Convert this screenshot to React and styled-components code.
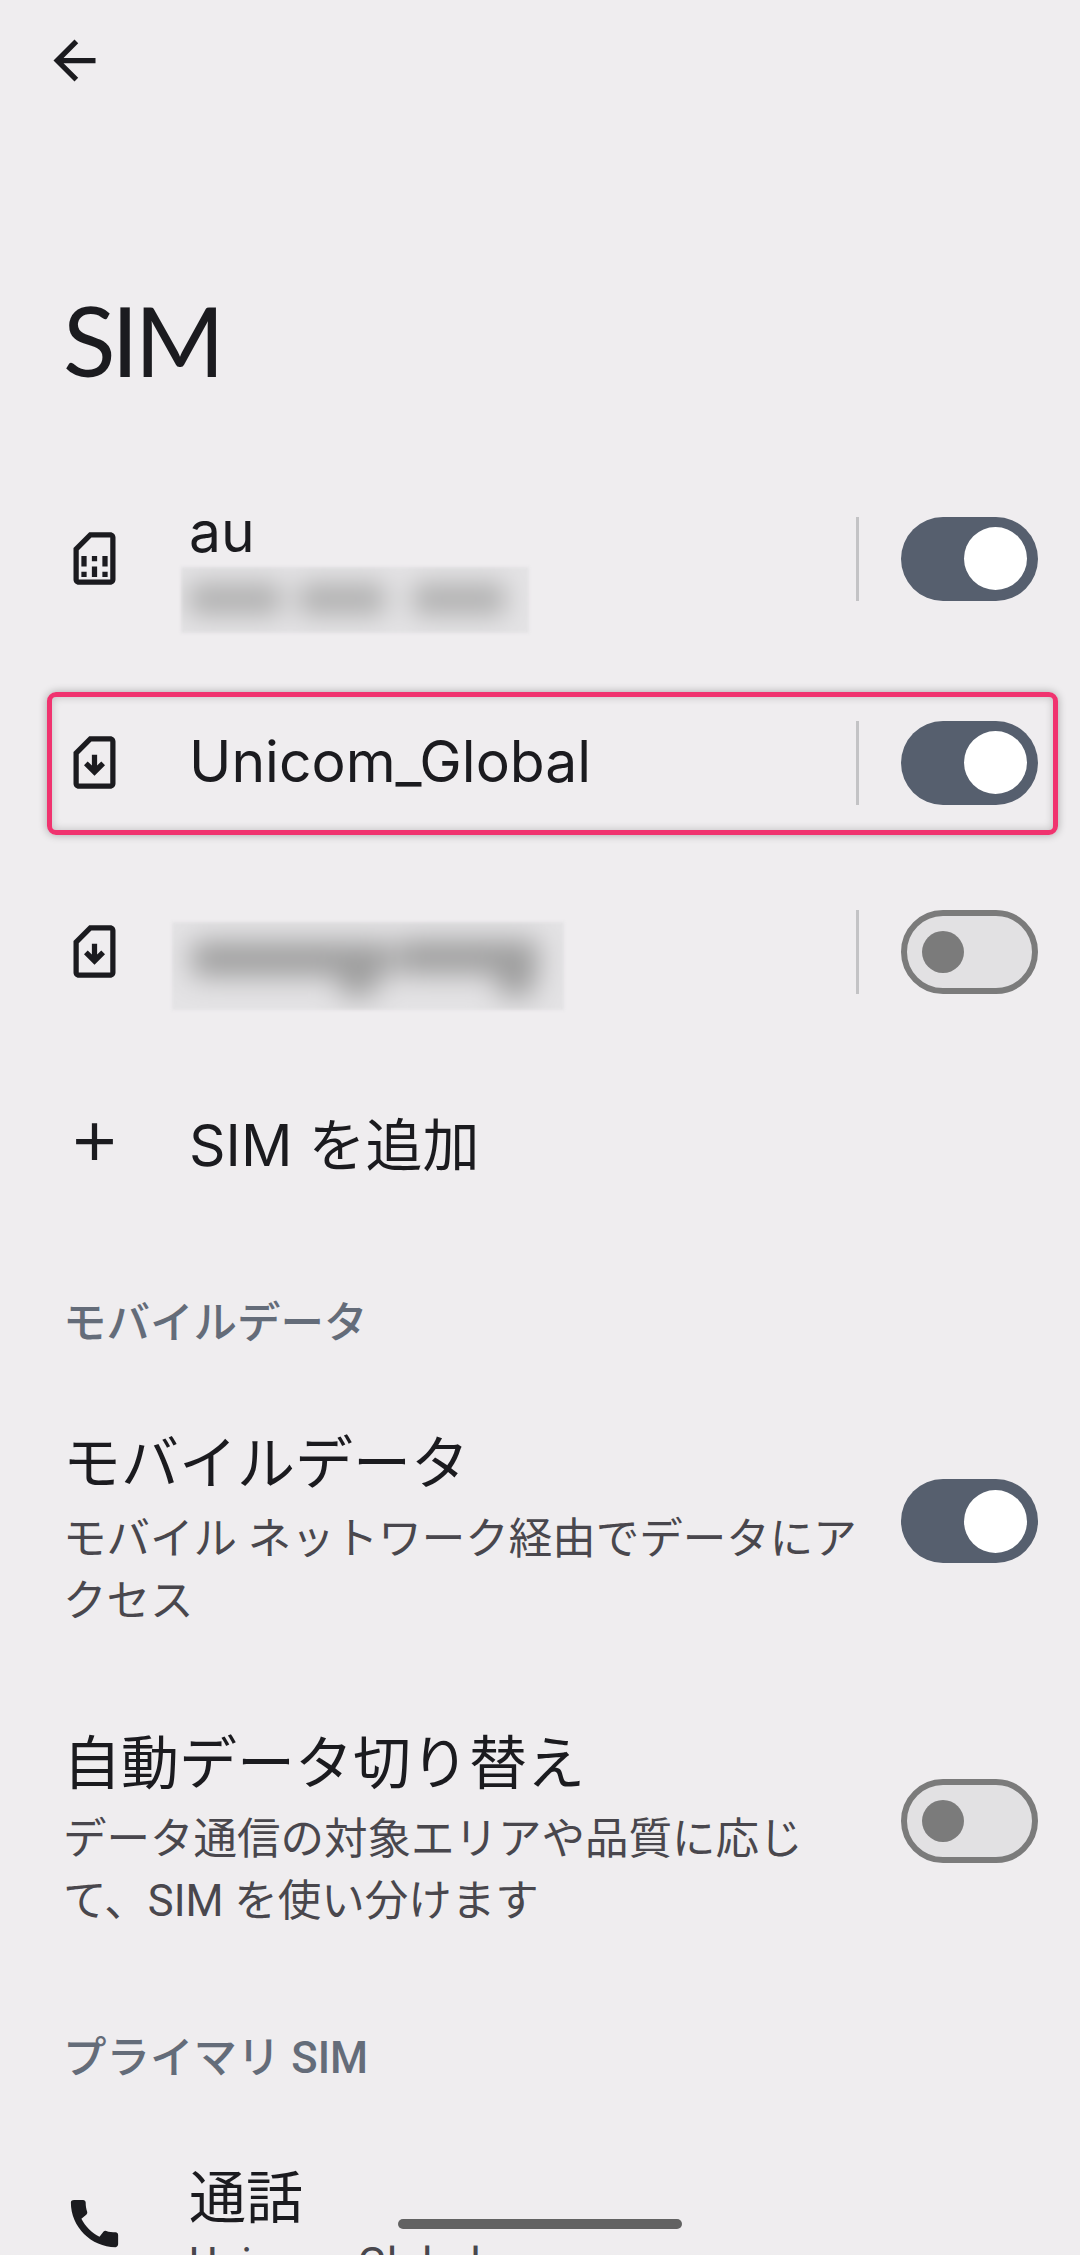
import styled, { createGlobalStyle } from "styled-components";
import { MdArrowBack, MdAdd, MdCall, MdOutlineSimCard, MdOutlineSimCardDownload } from "react-icons/md";

const GlobalStyle = createGlobalStyle`
  html, body {
    margin: 0;
    padding: 0;
    background: #efedef;
  }
`;

const Screen = styled.div`
  position: relative;
  width: 1080px;
  height: 2255px;
  overflow: hidden;
  background: #efedef;
  color: #1b1b1f;
  font-family: Inter, "Noto Sans CJK JP", sans-serif;
`;

const Toolbar = styled.div`
  height: 120px;
  padding-left: 43px;
  display: flex;
  align-items: center;
  svg {
    font-size: 63px;
  }
`;

const Heading = styled.h1`
  margin: 0;
  padding: 160px 0 49px 63px;
  font-family: Lato, sans-serif;
  font-size: 97px;
  line-height: 120px;
  font-weight: 400;
  letter-spacing: -4px;
`;

const Row = styled.div`
  position: relative;
  display: flex;
  align-items: center;
  box-sizing: border-box;
  height: ${(p) => p.$height}px;
  padding: 0 42px 0 63px;
`;

const IconSlot = styled.div`
  flex: none;
  width: 63px;
  height: 63px;
  margin-right: 63px;
  display: flex;
  align-items: center;
  justify-content: center;
  svg {
    font-size: 63px;
  }
`;

const RowBody = styled.div`
  flex: 1;
  min-width: 0;
  margin-top: ${(p) => p.$shift || 0}px;
`;

const RowTitle = styled.div`
  font-size: ${(p) => p.$size || 57}px;
  line-height: 66px;
`;

const Summary = styled.div`
  font-family: Roboto, "Noto Sans CJK JP", sans-serif;
  font-size: 43.5px;
  line-height: 62px;
  color: #49474d;
  margin-top: ${(p) => p.$gap || 0}px;
`;

// blurred-out number plates on the SIM rows
const Redacted = styled.div`
  width: ${(p) => p.$w}px;
  height: ${(p) => p.$h}px;
  margin-left: ${(p) => p.$left}px;
  margin-top: ${(p) => p.$top}px;
  background: #e4e3e5;
  overflow: hidden;
  filter: blur(1.5px);
`;

const Smudge = styled.svg`
  display: block;
  width: 100%;
  height: 100%;
  filter: blur(${(p) => p.$blur}px);
  fill: ${(p) => p.$fill};
`;

const Divider = styled.div`
  flex: none;
  width: 3px;
  height: 84px;
  margin-right: 42px;
  background: #c3c3c5;
`;

const Track = styled.div`
  flex: none;
  box-sizing: border-box;
  width: 137px;
  height: 84px;
  border-radius: 42px;
  display: flex;
  align-items: center;
  justify-content: ${(p) => (p.$on ? "flex-end" : "flex-start")};
  padding: ${(p) => (p.$on ? "0 11px" : "0 15px")};
  background: ${(p) => (p.$on ? "#565f6e" : "#e2e1e3")};
  border: ${(p) => (p.$on ? "none" : "6px solid #7b7b7b")};
`;

const Thumb = styled.div`
  width: ${(p) => (p.$on ? 63 : 42)}px;
  height: ${(p) => (p.$on ? 63 : 42)}px;
  border-radius: 50%;
  background: ${(p) => (p.$on ? "#ffffff" : "#7b7b7b")};
`;

const Toggle = ({ on }) => (
  <Track $on={on}>
    <Thumb $on={on} />
  </Track>
);

const HighlightFrame = styled.div`
  position: absolute;
  top: 24px;
  bottom: 22px;
  left: 47px;
  right: 22px;
  border: 5px solid #f0336f;
  border-radius: 9px;
  box-shadow: 0 0 8px rgba(0, 0, 0, 0.3), inset 0 0 8px rgba(0, 0, 0, 0.2);
  pointer-events: none;
`;

const SectionLabel = styled.div`
  box-sizing: border-box;
  height: 135px;
  padding: 63px 0 0 63px;
  font-family: Roboto, "Noto Sans CJK JP", sans-serif;
  font-size: 43.5px;
  line-height: 50px;
  font-weight: 500;
  color: #646c79;
`;

const SettingRow = styled.div`
  box-sizing: border-box;
  height: 300px;
  padding: 59px 42px 0 63px;
  display: flex;
  align-items: flex-start;
`;

const SettingText = styled.div`
  flex: 1;
  min-width: 0;
  margin-right: 42px;
`;

const ToggleSlot = styled.div`
  flex: none;
  margin-top: 49px;
`;

const HomeBar = styled.div`
  position: absolute;
  left: 398px;
  bottom: 26px;
  width: 284px;
  height: 10px;
  border-radius: 5px;
  background: #626262;
`;

export default function App() {
  return (
    <Screen>
      <GlobalStyle />
      <Toolbar>
        <MdArrowBack />
      </Toolbar>
      <Heading>SIM</Heading>

      <Row $height={219}>
        <IconSlot><MdOutlineSimCard /></IconSlot>
        <RowBody $shift={14}>
          <RowTitle>au</RowTitle>
          <Redacted $w={348} $h={66} $left={-8} $top={2}>
            <Smudge viewBox="0 0 348 66" $blur={13} $fill="#b0b0b0">
              <rect x="8" y="16" width="92" height="32" />
              <rect x="118" y="16" width="86" height="32" />
              <rect x="232" y="16" width="92" height="32" />
            </Smudge>
          </Redacted>
        </RowBody>
        <Divider />
        <Toggle on />
      </Row>

      <Row $height={189}>
        <IconSlot><MdOutlineSimCardDownload /></IconSlot>
        <RowBody $shift={-2}>
          <RowTitle>Unicom_Global</RowTitle>
        </RowBody>
        <Divider />
        <Toggle on />
        <HighlightFrame />
      </Row>

      <Row $height={189}>
        <IconSlot><MdOutlineSimCardDownload /></IconSlot>
        <RowBody>
          <Redacted $w={392} $h={88} $left={-17} $top={28}>
            <Smudge viewBox="0 0 392 88" $blur={14} $fill="#9c9c9c">
              <rect x="20" y="20" width="200" height="34" />
              <rect x="226" y="18" width="140" height="34" />
              <rect x="168" y="44" width="36" height="30" />
              <rect x="326" y="44" width="36" height="30" />
            </Smudge>
          </Redacted>
        </RowBody>
        <Divider />
        <Toggle />
      </Row>

      <Row $height={190}>
        <IconSlot><MdAdd /></IconSlot>
        <RowBody $shift={10}>
          <RowTitle>SIM を追加</RowTitle>
        </RowBody>
      </Row>

      <SectionLabel>モバイルデータ</SectionLabel>

      <SettingRow>
        <SettingText>
          <RowTitle $size={58}>モバイルデータ</RowTitle>
          <Summary $gap={13}>モバイル ネットワーク経由でデータにアクセス</Summary>
        </SettingText>
        <ToggleSlot><Toggle on /></ToggleSlot>
      </SettingRow>

      <SettingRow>
        <SettingText>
          <RowTitle $size={58}>自動データ切り替え</RowTitle>
          <Summary $gap={13}>データ通信の対象エリアや品質に応じて、SIM を使い分けます</Summary>
        </SettingText>
        <ToggleSlot><Toggle /></ToggleSlot>
      </SettingRow>

      <SectionLabel>プライマリ SIM</SectionLabel>

      <Row $height={234}>
        <IconSlot><MdCall /></IconSlot>
        <RowBody $shift={14}>
          <RowTitle>通話</RowTitle>
          <Summary $gap={3}>Unicom_Global</Summary>
        </RowBody>
      </Row>

      <HomeBar />
    </Screen>
  );
}
